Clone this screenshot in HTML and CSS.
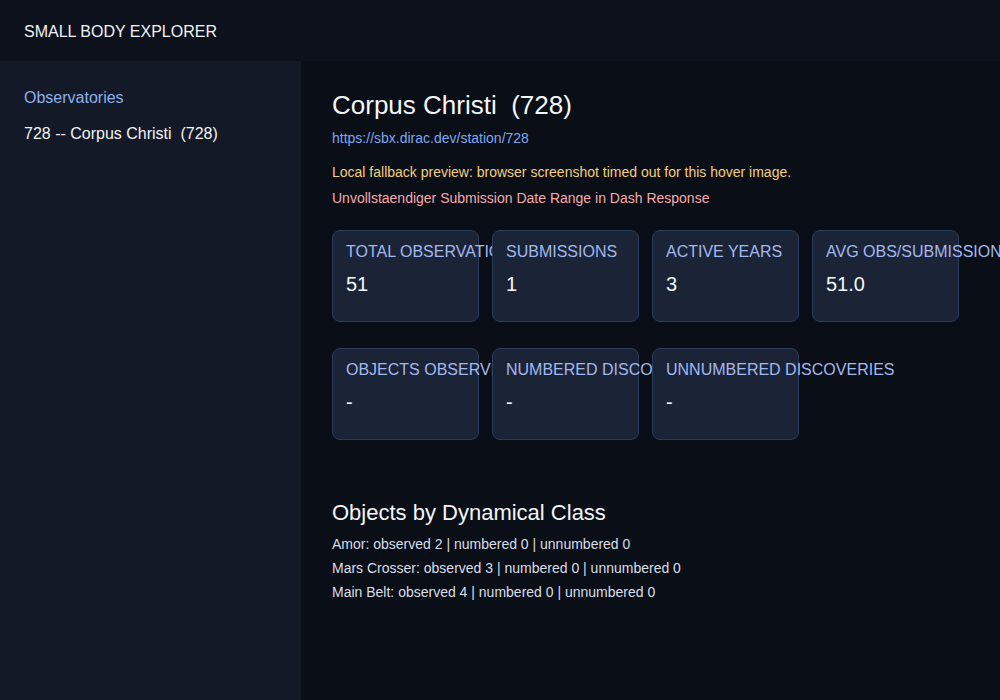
FILE: index.html
```html
<!DOCTYPE html>
<html lang="en">
<head>
  <meta charset="UTF-8">
  <meta name="viewport" content="width=device-width, initial-scale=1.0">
  <title>Small Body Explorer</title>
  <link rel="stylesheet" href="styles.css">
</head>
<body>

  <header class="topbar">SMALL BODY EXPLORER</header>

  <div class="layout">
    <aside class="sidebar">
      <div class="side-title">Observatories</div>
      <div class="side-item">728 -- Corpus Christi&nbsp; (728)</div>
    </aside>

    <main class="content">
      <h1 class="station-title">Corpus Christi&nbsp; (728)</h1>
      <a class="station-link" href="#">https://sbx.dirac.dev/station/728</a>
      <p class="note warn">Local fallback preview: browser screenshot timed out for this hover image.</p>
      <p class="note error">Unvollstaendiger Submission Date Range in Dash Response</p>

      <div class="card-row">
        <div class="card"><div class="card-label">TOTAL OBSERVATIONS</div><div class="card-value">51</div></div>
        <div class="card"><div class="card-label">SUBMISSIONS</div><div class="card-value">1</div></div>
        <div class="card"><div class="card-label">ACTIVE YEARS</div><div class="card-value">3</div></div>
        <div class="card"><div class="card-label">AVG OBS/SUBMISSION</div><div class="card-value">51.0</div></div>
      </div>

      <div class="card-row">
        <div class="card"><div class="card-label">OBJECTS OBSERVED</div><div class="card-value">-</div></div>
        <div class="card"><div class="card-label">NUMBERED DISCOVERIES</div><div class="card-value">-</div></div>
        <div class="card"><div class="card-label">UNNUMBERED DISCOVERIES</div><div class="card-value">-</div></div>
      </div>

      <h2 class="section-title">Objects by Dynamical Class</h2>
      <ul class="class-list">
        <li>Amor: observed 2 | numbered 0 | unnumbered 0</li>
        <li>Mars Crosser: observed 3 | numbered 0 | unnumbered 0</li>
        <li>Main Belt: observed 4 | numbered 0 | unnumbered 0</li>
      </ul>
    </main>
  </div>

</body>
</html>
```

FILE: styles.css
```css
* {
  box-sizing: border-box;
}

html, body {
  height: 100%;
}

body {
  margin: 0;
  font-family: 'Liberation Sans', Arial, sans-serif;
  background-color: #0a0e16;
  color: #e8ecf4;
  display: flex;
  flex-direction: column;
}

.topbar {
  height: 61px;
  flex-shrink: 0;
  display: flex;
  align-items: center;
  padding: 2px 24px 0;
  font-size: 16px;
  color: #f1f3f7;
  background-color: #0c111b;
}

.layout {
  flex: 1;
  display: flex;
}

.sidebar {
  width: 301px;
  flex-shrink: 0;
  padding: 25px 24px;
  background-color: #131926;
  font-size: 16px;
  line-height: 24px;
}

.side-title {
  color: #8fb0f0;
  margin-bottom: 12px;
}

.side-item {
  color: #f1f3f7;
}

.content {
  flex: 1;
  padding: 29px 31px;
  background-color: #0a0e16;
}

.station-title {
  margin: 0;
  font-size: 26px;
  line-height: 30px;
  font-weight: normal;
  color: #f4f6fa;
}

.station-link {
  display: block;
  margin-top: 9px;
  font-size: 14px;
  line-height: 18px;
  color: #7fa8f0;
  text-decoration: none;
}

.note {
  margin: 8px 0 0;
  font-size: 14px;
  line-height: 18px;
}

.warn {
  margin-top: 16px;
  color: #f3cf7f;
}

.error {
  color: #f5abab;
}

.card-row {
  display: flex;
  gap: 13px;
  margin-top: 23px;
}

.card-row + .card-row {
  margin-top: 26px;
}

.card {
  width: 147px;
  height: 92px;
  padding: 12px 13px;
  background-color: #1b2436;
  border: 1px solid #2a3d5c;
  border-radius: 8px;
  white-space: nowrap;
}

.card-label {
  font-size: 16px;
  line-height: 18px;
  color: #a3b8ef;
}

.card-value {
  margin-top: 11px;
  font-size: 20px;
  line-height: 24px;
  color: #f4f6fa;
}

.section-title {
  margin: 60px 0 6px;
  font-size: 22px;
  line-height: 26px;
  font-weight: normal;
  color: #f4f6fa;
}

.class-list {
  list-style-type: none;
  margin: 0;
  padding: 0;
  font-size: 14px;
  line-height: 24px;
  color: #d9dfea;
}
```
